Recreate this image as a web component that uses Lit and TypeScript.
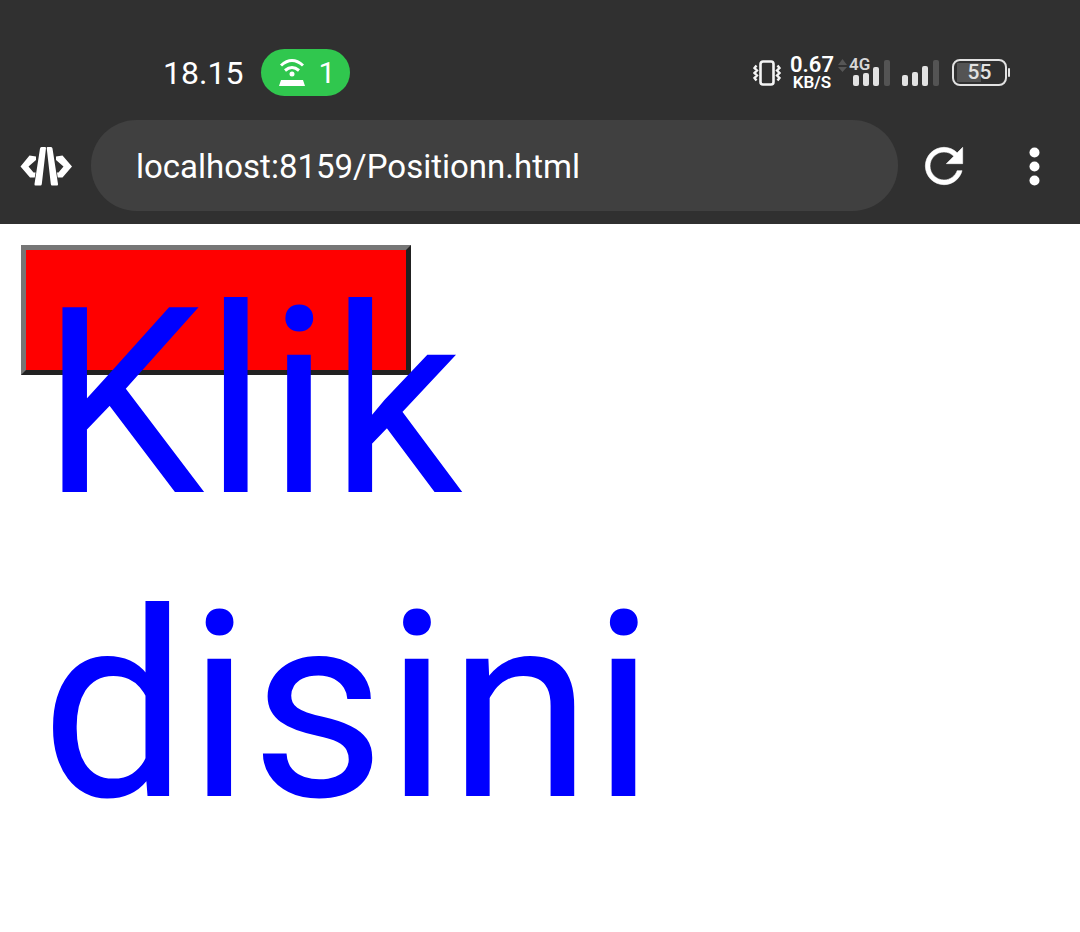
import { LitElement, html, css } from "lit";
import { customElement, property } from "lit/decorators.js";

@customElement("status-bar")
class StatusBar extends LitElement {
  static styles = css`
    :host {
      display: flex;
      align-items: center;
      justify-content: space-between;
      height: 47px;
      padding: 49px 70px 24px 163px;
      color: #fff;
    }
    .side {
      display: flex;
      align-items: center;
    }
    .left {
      gap: 18px;
    }
    .time {
      font-size: 32px;
      line-height: 48px;
    }
    .hotspot {
      display: flex;
      align-items: center;
      gap: 12px;
      box-sizing: border-box;
      width: 89px;
      height: 47px;
      padding-left: 17px;
      border-radius: 24px;
      background: #30c74e;
      font-size: 30px;
    }
    svg {
      display: block;
      flex: none;
    }
    .speed {
      display: flex;
      flex-direction: column;
      align-items: center;
      width: 44px;
      margin: 0 4px 0 9px;
      font-weight: 600;
    }
    .rate {
      font-size: 22px;
      line-height: 18px;
    }
    .unit {
      font-size: 17px;
      line-height: 16px;
    }
    .cell {
      position: relative;
      margin-right: 12px;
    }
    .net {
      position: absolute;
      left: 11px;
      top: -3px;
      font-size: 17px;
      line-height: 16px;
      font-weight: 600;
      color: #d8d8d8;
    }
    .battery {
      display: flex;
      align-items: center;
      gap: 1px;
      margin-left: 13px;
    }
    .level {
      box-sizing: border-box;
      width: 55px;
      height: 27px;
      padding: 2px;
      border: 2px solid #e2e2e2;
      border-radius: 8px;
      font-size: 21px;
      font-weight: 500;
      line-height: 19px;
      text-align: center;
      color: #e2e2e2;
      background: linear-gradient(#545454, #545454) 3px 2px / 24px 19px no-repeat;
    }
    .tip {
      width: 2px;
      height: 9px;
      background: #e2e2e2;
      border-radius: 1px;
    }
  `;

  render() {
    return html`
      <div class="side left">
        <span class="time">18.15</span>
        <span class="hotspot">
          <svg width="28" height="30" viewBox="0 0 28 30" fill="none" stroke="#fff" stroke-width="3">
            <path d="M3 7.500Q14-2.500 25 7.500M7 12.500Q14 6.500 21 12.500" />
            <circle cx="14" cy="16" r="2.5" fill="#fff" stroke="none" />
            <path d="M3 22H25L27 28H1Z" fill="#fff" stroke="none" />
          </svg>
          <span>1</span>
        </span>
      </div>
      <div class="side">
        <svg width="28" height="26" viewBox="0 0 28 26" fill="none" stroke="#f4f4f4">
          <rect x="7.5" y="1.5" width="13" height="23" rx="2.5" stroke-width="2.6" />
          <path
            d="M3.500 5.500L1.500 8L4 10.500L1.500 13L4 15.500L1.500 18L3.500 20.500M24.500 5.500L26.500 8L24 10.500L26.500 13L24 15.500L26.500 18L24.500 20.500"
            stroke-width="2.4"
          />
        </svg>
        <span class="speed">
          <span class="rate">0.67</span>
          <span class="unit">KB/S</span>
        </span>
        <span class="cell">
          <svg width="52" height="28" viewBox="0 0 52 28">
            <path d="M0 6L4.500 0L9 6ZM0 8L4.500 13L9 8Z" fill="#565656" />
            <g fill="#e2e2e2">
              <rect x="15" y="16" width="6" height="11" rx="2" />
              <rect x="25" y="14" width="6" height="13" rx="2" />
              <rect x="35" y="8" width="6" height="19" rx="2" />
            </g>
            <rect x="46" y="1" width="6" height="26" rx="2" fill="#545454" />
          </svg>
          <span class="net">4G</span>
        </span>
        <svg width="37" height="28" viewBox="0 0 37 28">
          <g fill="#e2e2e2">
            <rect x="0" y="16" width="6" height="11" rx="2" />
            <rect x="10" y="13" width="6" height="14" rx="2" />
            <rect x="20" y="7" width="6" height="20" rx="2" />
          </g>
          <rect x="31" y="1" width="6" height="26" rx="2" fill="#545454" />
        </svg>
        <span class="battery">
          <span class="level">55</span>
          <span class="tip"></span>
        </span>
      </div>
    `;
  }
}

@customElement("address-bar")
class AddressBar extends LitElement {
  @property() url = "";

  static styles = css`
    :host {
      display: flex;
      align-items: center;
      padding-bottom: 13px;
    }
    button {
      display: flex;
      align-items: center;
      justify-content: center;
      flex: none;
      width: 91px;
      height: 91px;
      padding: 0;
      border: 0;
      background: none;
    }
    input {
      flex: 1;
      min-width: 0;
      box-sizing: border-box;
      height: 91px;
      padding: 2px 45px 0;
      border: 0;
      border-radius: 46px;
      outline: 0;
      background: #404040;
      color: #fff;
      font: 33px Roboto, sans-serif;
    }
  `;

  render() {
    return html`
      <button aria-label="Editor">
        <svg width="54" height="40" viewBox="0 0 54 40">
          <path
            d="M17 10.500L10.500 9.500L1.500 20.500L11 31.500H18V26.500H14.500L9.500 20.500L17 14Z"
            fill="#fff"
          />
          <path
            d="M37 10.500L43.500 9.500L53 20.500L43.500 31.500H36V26.500H39.500L44.500 20.500L37 14Z"
            fill="#fff"
          />
          <g stroke="#303030" stroke-width="1.5" paint-order="stroke" fill="#fff">
            <path d="M22.500 1H26Q27 1 27 2L22.800 38Q22.600 39.500 21.500 39.500H16.500Q15.200 39.500 15.500 38L21 2.500Q21.200 1 22.500 1Z" />
            <path d="M32 1H28.700Q27.700 1 27.700 2L31.800 38Q32 39.500 33 39.500H38Q39.300 39.500 39 38L33.500 2.500Q33.300 1 32 1Z" />
          </g>
        </svg>
      </button>
      <input type="text" aria-label="Address" .value=${this.url} />
      <button aria-label="Reload">
        <svg width="56" height="56" viewBox="0 0 24 24" fill="#fff">
          <path
            d="M17.650 6.350C16.200 4.900 14.210 4 12 4c-4.420 0-7.990 3.580-7.990 8s3.570 8 7.990 8c3.730 0 6.840-2.550 7.730-6h-2.080c-.820 2.330-3.040 4-5.650 4-3.310 0-6-2.690-6-6s2.690-6 6-6c1.660 0 3.140.690 4.220 1.780L13 11h7V4l-2.350 2.350z"
            stroke="#fff"
            stroke-width=".25"
          />
        </svg>
      </button>
      <button aria-label="Menu">
        <svg width="12" height="40" viewBox="0 0 12 40" fill="#fff">
          <circle cx="5.500" cy="6.500" r="5" />
          <circle cx="5.500" cy="20.500" r="5" />
          <circle cx="5.500" cy="34.500" r="5" />
        </svg>
      </button>
    `;
  }
}

@customElement("app-root")
class AppRoot extends LitElement {
  static styles = css`
    :host {
      display: block;
      min-height: 100vh;
      background: #fff;
      font-family: Roboto, sans-serif;
    }
    header {
      background: #303030;
    }
    main {
      padding: 21px;
    }
    .klik {
      display: block;
      box-sizing: border-box;
      width: 390px;
      height: 130px;
      padding: 1px 15px;
      border: 5px solid;
      border-color: #767676 #212121 #212121 #767676;
      background: #f00;
      color: #00f;
      font: 260px Roboto, sans-serif;
      text-align: left;
    }
    .label {
      display: flex;
      height: 100%;
    }
  `;

  render() {
    return html`
      <header>
        <status-bar></status-bar>
        <address-bar url="localhost:8159/Positionn.html"></address-bar>
      </header>
      <main>
        <button class="klik"><span class="label">Klik disini</span></button>
      </main>
    `;
  }
}
